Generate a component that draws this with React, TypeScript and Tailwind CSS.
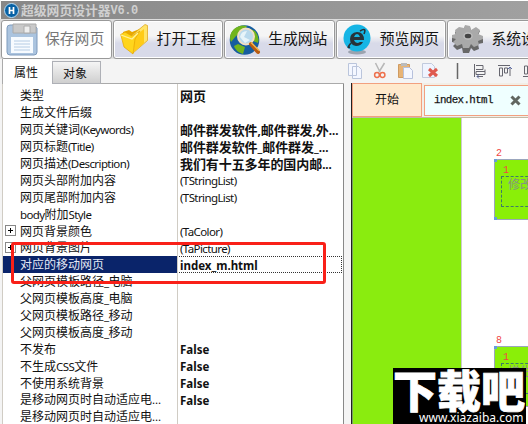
import React from "react";

interface PropertyItem {
  name: string;
  value?: string;
  strong?: boolean;
  expandable?: boolean;
  selected?: boolean;
}

const properties: PropertyItem[] = [
  { name: "类型", value: "网页", strong: true },
  { name: "生成文件后缀" },
  { name: "网页关键词(Keywords)", value: "邮件群发软件,邮件群发,外...", strong: true },
  { name: "网页标题(Title)", value: "邮件群发软件_邮件群发_...", strong: true },
  { name: "网页描述(Description)", value: "我们有十五多年的国内邮...", strong: true },
  { name: "网页头部附加内容", value: "(TStringList)" },
  { name: "网页尾部附加内容", value: "(TStringList)" },
  { name: "body附加Style" },
  { name: "网页背景颜色", value: "(TaColor)", expandable: true },
  { name: "网页背景图片", value: "(TaPicture)", expandable: true },
  { name: "对应的移动网页", value: "index_m.html", strong: true, selected: true },
  { name: "父网页模板路径_电脑" },
  { name: "父网页模板高度_电脑" },
  { name: "父网页模板路径_移动" },
  { name: "父网页模板高度_移动" },
  { name: "不发布", value: "False", strong: true },
  { name: "不生成CSS文件", value: "False", strong: true },
  { name: "不使用系统背景", value: "False", strong: true },
  { name: "是移动网页时自动适应电…", value: "False", strong: true },
  { name: "是移动网页时自动适应电…" },
];

// Latin and CJK runs have different sizes in the property grid
const MixedText: React.FC<{ text: string; strong?: boolean }> = ({ text, strong }) => (
  <>
    {(text.match(/[\u2e80-\u9fff]+|[^\u2e80-\u9fff]+/g) ?? []).map((part, i) =>
      /[\u2e80-\u9fff]/.test(part) ? (
        <span key={i} className={strong ? "text-[13px] tracking-[-0.08px]" : "text-[12px]"}>
          {part}
        </span>
      ) : (
        <span key={i} className={strong ? "text-[11.5px]" : "text-[11.5px] tracking-[-0.6px]"}>
          {part}
        </span>
      ),
    )}
  </>
);

const PropertyRow: React.FC<PropertyItem> = ({ name, value, strong, expandable, selected }) => (
  <div className="flex h-[16.9px] shrink-0 items-center whitespace-nowrap leading-[16px]">
    <div
      className={`flex h-full w-[174px] shrink-0 items-center ${selected ? "bg-[#0a246a] text-[#e5e9f5]" : ""}`}
    >
      <span className="flex w-[17px] shrink-0 pl-[2px]">
        {expandable && (
          <svg className="h-[11px] w-[11px]" viewBox="0 0 11 11" fill="none" shapeRendering="crispEdges">
            <path d="M.5.5h10v10H.5z" stroke="#888" />
            <path d="M3 5.5h5M5.5 3v5" stroke="#000" />
          </svg>
        )}
      </span>
      <span>
        <MixedText text={name} />
      </span>
    </div>
    <div
      className={`h-full w-[165px] shrink-0 border pl-[2px] leading-[14px] ${selected ? "border-dotted border-[#333]" : "border-transparent"} ${strong ? "font-bold" : ""}`}
    >
      {value && <MixedText text={value} strong={strong} />}
    </div>
  </div>
);

const SaveIcon = () => (
  <svg className="h-[33px] w-[32px]" viewBox="0 0 32 33">
    <path d="M1 5q0-3 3-3h24l3 3v24q0 3-3 3H4q-3 0-3-3z" fill="#abc4df" stroke="#7e9bbd" />
    <path d="M7 1h23v9H7z" fill="#c9c9c9" stroke="#aaa" />
    <path d="M18 3h6v7h-6z" fill="#eee" stroke="#aaa" />
    <path d="M5 14h22v16H5z" fill="#f7fbff" />
    <path d="M8 18h16M8 21h16M8 24h16M8 27h16" stroke="#b5cce4" />
  </svg>
);

const FolderIcon = () => (
  <svg className="h-[31px] w-[28px]" viewBox="0 0 28 31">
    <path d="M3 8l6-2 3 2 10-4v12L12 28 5 22z" fill="#e9a800" />
    <path d="M11 12L25 .5l2.5 1v15L13 29z" fill="#ffe468" stroke="#dba114" strokeWidth=".7" />
    <path d="M14 13L24 5v14L14 28z" fill="#ffcb17" />
    <path d="M.7 10.5L5 8l7 4 8-5-5 8-2 15-9-7z" fill="#ffd51c" stroke="#e5a300" strokeWidth=".7" />
    <path d="M1 11l11 4 6-6" fill="none" stroke="#fff19c" strokeWidth="1.3" />
  </svg>
);

const GlobeIcon = () => (
  <svg className="h-[32px] w-[32px]" viewBox="0 0 32 32">
    <circle cx="15.5" cy="16" r="14.8" fill="#165d9f" />
    <path d="M5 5q6-5 13-3l-4 6-7 4-5 6Q-1 11 5 5zm16 0l5 2q5 6 3 12l-7-3zM9 20l7 3-2 7q-8-3-9-8z" fill="#71b51c" />
    <circle cx="17" cy="12.5" r="8" fill="#b9d9ec" stroke="#f2dfc3" strokeWidth="2" />
    <path d="M11 13q1-6 7-6l-3 6 6 3-5 3z" fill="#e7f4f9" />
    <path d="M22 20l7 8" stroke="#b95c12" strokeWidth="4" strokeLinecap="round" />
    <path d="M22 18.5l8 8" stroke="#f4b84c" strokeWidth="1.5" />
  </svg>
);

const BrowserIcon = () => (
  <svg className="h-[31px] w-[28px]" viewBox="0 0 28 31">
    <ellipse cx="14" cy="28" rx="9" ry="2.5" fill="#9ca3af" />
    <circle cx="14" cy="14" r="13.5" fill="#16b5e5" />
    <path
      d="M20 18q-2 4-7 4-6-1-6-7t7-7q7 0 7 8H11q1 3 4 3l2-1zM11 13h6q-1-3-3-3t-3 3z"
      fill="#27323a"
      fillRule="evenodd"
    />
    <path d="M8 19q-5 6-1 4M17 7q7-4 4 3" fill="none" stroke="#27323a" strokeWidth="1.6" />
  </svg>
);

const GearIcon = () => (
  <svg className="h-[29px] w-[32px]" viewBox="0 0 32 29">
    <path
      d="M12 4l1-3 5 1 1 4 5-3 4 3-2 4 5 2v6l-5 1 1 5-5 2-3-3-2 5h-6l-1-5-5 2-4-4 3-3-4-1v-5l4-1-1-4 4-3z"
      fill="#686868"
    />
    <path
      d="M12 3l1-3 5 1 1 4 5-3 4 3-2 4 5 2v3l-5 2 1 4-5 2-3-3-2 4h-6l-1-4-5 2-4-4 3-3-4-1v-3l4-1-1-4 4-3z"
      fill="#a9a9a9"
    />
    <ellipse cx="16" cy="11" rx="4" ry="3" fill="#444" stroke="#bdbdbd" strokeWidth="1.4" />
  </svg>
);

interface ToolButtonProps {
  label: string;
  icon: React.ReactNode;
  disabled?: boolean;
}

const ToolButton: React.FC<ToolButtonProps> = ({ label, icon, disabled }) => (
  <div
    className={`flex h-[39px] w-[110.6px] shrink-0 items-center gap-[5px] rounded-[3px] border border-[#999] pl-[2px] text-[14.8px] whitespace-nowrap shadow-[inset_0_0_0_1px_#fff] ${disabled ? "bg-white text-[#777]" : "bg-linear-to-b from-[#f5f5f5] from-40% to-[#d8dae9] to-60% text-[#151515]"}`}
  >
    <span className="flex w-[36px] shrink-0 justify-center">{icon}</span>
    <span className="-mt-[2px]">{label}</span>
  </div>
);

const EditIcons = () => (
  <div className="flex h-[24px] shrink-0 items-center overflow-hidden pl-[3px]">
    <svg className="h-[18px] w-[184px] shrink-0" viewBox="0 0 184 18" fill="none">
      <path d="M1.5 1.5h8v12h-8zM5.5 4.5h6l3 3v9h-9z" fill="#f4f7ff" stroke="#bac5dc" />
      <path d="M28.5 1l4.5 9M37.5 1L32 10" stroke="#b7b7b7" strokeWidth="1.5" />
      <circle cx="30" cy="13" r="2.4" stroke="#ed704c" strokeWidth="1.5" />
      <circle cx="35.5" cy="13" r="2.4" stroke="#ed704c" strokeWidth="1.5" />
      <path d="M51.5 2.5h11v13h-11z" fill="#e7b477" stroke="#cf9b61" />
      <path d="M54 1h6v3h-6z" fill="#bbb" />
      <path d="M56.5 5.5h6l3 3v8h-9z" fill="#f4f7ff" stroke="#b7c1dc" />
      <path d="M75.5 1.5h9l3 3v11h-12z" fill="#eff4ff" stroke="#c1cadd" />
      <path d="M82 7l8 7M90 7l-8 7" stroke="#df594e" strokeWidth="3" />
      <path d="M110.5 1v16" stroke="#666" strokeWidth="1.5" />
      <path d="M127.5 2v13M129 3.5h7v4h-7M129 9.5h9v-2M129 9.5v3h9v-3M130 14.5h6" stroke="#66666f" />
      <path d="M151 3.5h12M152.5 6v8h3V6zM157.5 6v5h3V6zM163 5v9" stroke="#66666f" />
      <path d="M161 7l2-2 2 2M130 14.5l2-2M130 14.5l2 2" stroke="#5968a7" />
      <path d="M176 14.5h8M177.5 4v8h3V4z" stroke="#66666f" />
    </svg>
  </div>
);

interface BlockProps {
  index: number;
  text: string;
}

const Block: React.FC<BlockProps> = ({ index, text }) => (
  <div className="h-[70px] w-[40px] font-['Liberation_Mono'] text-[10px] leading-[10px] text-[#f04747]">
    <div className="pl-[2px]">{index}</div>
    <div className="relative h-[61px] rounded-tl-[4px] border border-[#9ba6bd] bg-[#8aef08] pt-[6px] pl-[6px]">
      <span className="absolute -top-[1px] -left-[1px] h-[3px] w-[3px] bg-[#669fdb]" />
      <span className="absolute -bottom-[1px] -left-[1px] h-[3px] w-[3px] bg-[#669fdb]" />
      <div className="pl-[2px]">1</div>
      <div className="h-[31px] border border-dashed border-[#3d7b69] pl-[6px] font-['Noto_Sans_CJK_SC'] text-[12px] leading-[14px] whitespace-nowrap text-[#859183]">
        {text}
      </div>
    </div>
  </div>
);

const Inspector = () => (
  <div className="flex w-[344px] shrink-0 flex-col pl-[2px]">
    <div className="flex h-[25px] items-end pt-[1px]">
      <div className="flex h-[25px] w-[50px] items-center justify-center border-l border-[#aaa] bg-white pr-[3px] text-[12px]">
        属性
      </div>
      <div className="flex h-[23px] w-[49px] items-center justify-center border border-[#aeb0b6] bg-linear-to-b from-[#f5f5f5] to-[#cfcfcf] pr-[3px] text-[12px]">
        对象
      </div>
      <div className="h-full flex-1 border-b border-[#aaa]" />
    </div>
    <div className="relative flex h-[340px] flex-col overflow-hidden border-r border-l border-r-[#888] border-l-[#d0ccc4] bg-white pt-[3px] font-['Noto_Sans','Noto_Sans_CJK_SC',sans-serif]">
      {properties.map((item, i) => (
        <PropertyRow key={i} {...item} />
      ))}
      <div className="absolute top-0 left-[174px] h-full w-px bg-[#d0ccc4]" />
    </div>
  </div>
);

const DesignArea = () => (
  <div className="flex min-w-0 flex-1 flex-col">
    <EditIcons />
    <div className="flex min-h-0 flex-1 pl-[7px]">
      <div className="flex min-w-0 flex-1 flex-col border-l border-[#222]">
        <div className="flex h-[35px] shrink-0 gap-[2px] border-b border-[#c3b9a5] bg-[#f2eee6]">
          <div className="flex h-[34px] w-[70px] shrink-0 items-center justify-center border border-[#f2a07f] bg-[#ffe9cc] pb-[3px] text-[12px]">
            开始
          </div>
          <div className="mt-[2px] flex h-[31px] w-[110px] shrink-0 items-center border border-[#f2a07f] bg-[#efffff] pl-[9px]">
            <span className="w-[76px] shrink-0 font-['Liberation_Mono'] text-[10.8px] tracking-[-0.6px] [-webkit-text-stroke:0.25px_#222]">
              index.html
            </span>
            <svg className="h-[11px] w-[11px]" viewBox="0 0 11 11">
              <path d="M1.5 1.5l8 8M9.5 1.5l-8 8" stroke="#606660" strokeWidth="3" />
            </svg>
          </div>
        </div>
        <div className="relative flex-1 overflow-hidden bg-white">
          <div className="h-full w-[110px] border-r border-l border-r-[#ccc] border-l-[#779d63] bg-[#8aec0f]" />
          <div className="absolute top-[31px] left-[142px]">
            <Block index={2} text="修改" />
          </div>
          <div className="absolute top-[218px] left-[142px]">
            <Block index={8} text="增生" />
          </div>
        </div>
      </div>
    </div>
  </div>
);

const App = () => (
  <div className="relative flex h-[424px] w-[528px] flex-col overflow-hidden bg-[#f4f4f4] font-['Noto_Sans_CJK_SC',sans-serif] text-[#111]">
    <div className="ml-px flex h-[19px] shrink-0 items-center border-t border-white bg-linear-to-r from-[#878787] to-[#a0a0a0] pl-[3px]">
      <svg className="h-[15px] w-[15px]" viewBox="0 0 15 15">
        <circle cx="7.5" cy="7.5" r="7" fill="#0862a5" stroke="#b8dcf5" />
        <path d="M5.5 4v7M9.5 4v7M5.5 7.5h4" stroke="#fff" strokeWidth="1.7" />
      </svg>
      <span className="pl-[2px] text-[12.8px] leading-[18px] font-bold text-[#d0d0d0]">超级网页设计器</span>
      <span className="pt-[2px] font-['Liberation_Mono'] text-[12px] leading-[16px] font-bold tracking-[-0.4px] text-[#d0d0d0]">
        V6.0
      </span>
    </div>
    <div className="flex h-[40px] shrink-0 gap-px overflow-hidden bg-[#ddd] pt-px pl-px">
      <ToolButton label="保存网页" icon={<SaveIcon />} disabled />
      <ToolButton label="打开工程" icon={<FolderIcon />} />
      <ToolButton label="生成网站" icon={<GlobeIcon />} />
      <ToolButton label="预览网页" icon={<BrowserIcon />} />
      <ToolButton label="系统设置" icon={<GearIcon />} />
    </div>
    <div className="flex min-h-0 flex-1">
      <Inspector />
      <DesignArea />
    </div>
    <div className="absolute top-[242px] left-[11px] h-[42px] w-[315px] rounded-[3px] border-[3px] border-[#f92018]" />
    <div className="absolute top-[368px] left-[393px] h-[56px] w-[133px] overflow-hidden bg-black text-white">
      <div className="h-[43px] text-[44px] leading-[43px] font-black whitespace-nowrap [-webkit-text-stroke:0.8px_#fff]">
        下载吧
      </div>
      <div className="pl-[26px] font-['Noto_Sans'] text-[12px] leading-[13px] tracking-[0.02px]">www.xiazaiba.com</div>
    </div>
  </div>
);

export default App;
